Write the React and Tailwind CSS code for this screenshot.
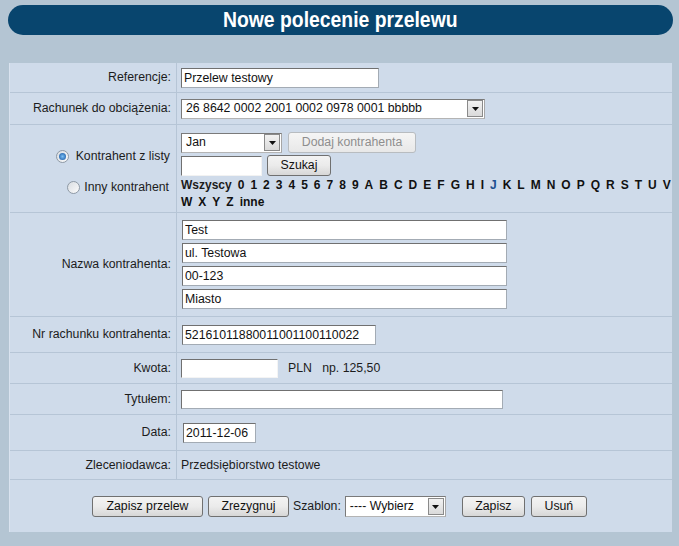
import React from "react";

const letters = ["0","1","2","3","4","5","6","7","8","9","A","B","C","D","E","F","G","H","I","J","K","L","M","N","O","P","Q","R","S","T","U","V","W","X","Y","Z","inne"];

const inputCls =
  "h-5 bg-white border border-[#a3abb4] border-t-[#707070] border-l-[#707070] px-[2px] text-[12.3px] text-[#111] outline-none";

function Btn({ children, className = "", disabled }) {
  return (
    <button
      className={`h-[21px] rounded-[3px] border text-[12.3px] ${
        disabled
          ? "border-[#b8bcc0] text-[#8e8e8e] bg-linear-to-b from-[#f5f5f5] to-[#e8e8e8]"
          : "border-[#707070] text-[#111] bg-linear-to-b from-[#f3f3f3] via-[#ebebeb] to-[#d7d7d7]"
      } ${className}`}
    >
      {children}
    </button>
  );
}

function Select({ value, className = "" }) {
  return (
    <div className={`flex items-center bg-white border border-[#7a7a7a] border-r-[#a6a6a6] border-b-[#b4b4b4] ${className}`}>
      <span className="flex-1 pl-[4px] text-[12.3px] text-[#111] truncate">{value}</span>
      <span className="w-[16px] h-[17px] mr-[1px] border border-[#8a8a8a] bg-linear-to-b from-[#f2f2f2] to-[#dadada] flex items-center justify-center">
        <svg width="7" height="4" viewBox="0 0 7 4">
          <path d="M0 0H7L3.5 4Z" fill="#111" />
        </svg>
      </span>
    </div>
  );
}

function Radio({ checked }) {
  return (
    <span className="w-[13px] h-[13px] rounded-full border border-[#8e99a5] bg-linear-to-br from-[#d9dde2] to-[#fbfbfb] flex items-center justify-center shrink-0">
      {checked && <span className="w-[7px] h-[7px] rounded-full bg-radial from-[#7cc0f5] to-[#0c4f9c]" />}
    </span>
  );
}

function Row({ label, h, children, className = "", labelCls = "items-center justify-end" }) {
  return (
    <div className={`flex border-b border-[#b6c5d6] ${h}`}>
      <div className={`w-[167px] shrink-0 border-r border-[#b6c5d6] flex pr-[5px] ${labelCls}`}>
        {label}
      </div>
      <div className={`flex-1 pl-[4px] ${className}`}>{children}</div>
    </div>
  );
}

export default function App() {
  return (
    <div
      className="min-h-[546px] bg-[#b4c5d3] pt-[5px] text-[12.3px] text-[#1c1c1c]"
      style={{ fontFamily: '"Liberation Sans", Arial, sans-serif' }}
    >
      <div className="ml-[8px] mr-[6px] h-[30px] rounded-full bg-[#08456e] flex items-center justify-center">
        <h1 className="inline-block scale-x-[0.88] text-white font-bold text-[22px] leading-none">
          Nowe polecenie przelewu
        </h1>
      </div>

      <div className="mt-[28px] ml-[9px] w-[663px] bg-[#cfdbea] border-l border-[#dae3ef]">
        <Row label="Referencje:" h="h-[30px]" className="flex items-center">
          <input className={`${inputCls} w-[198px]`} defaultValue="Przelew testowy" />
        </Row>

        <Row label="Rachunek do obciążenia:" h="h-[32px]" className="flex items-center">
          <Select value="26 8642 0002 2001 0002 0978 0001 bbbbb" className="w-[304px] h-5" />
        </Row>

        <Row
          h="h-[88px]"
          labelCls="flex-col items-end justify-start pt-[23px] gap-[15px]"
          className="pt-[7px] flex flex-col items-start"
          label={
            <>
              <span className="flex items-center gap-[7px] h-4 pr-[1px]">
                <Radio checked />
                Kontrahent z listy
              </span>
              <span className="flex items-center gap-[4px] h-4 pr-[2px]">
                <Radio />
                Inny kontrahent
              </span>
            </>
          }
        >
          <div className="flex items-center">
            <Select value="Jan" className="w-[101px] h-[20px]" />
            <Btn disabled className="ml-[6px] w-[128px] h-[20px]">Dodaj kontrahenta</Btn>
          </div>
          <div className="flex items-center mt-[2px]">
            <input className={`${inputCls} w-[81px] border-[#f2f2f2]`} />
            <Btn className="ml-[5px] w-[64px]">Szukaj</Btn>
          </div>
          <div className="flex flex-wrap gap-x-[6px] font-bold text-[12px] leading-[17px] mt-[1px]">
            <span>Wszyscy</span>
            {letters.map((l) => (
              <span key={l} className={l === "J" ? "text-[#1d4f8f]" : "text-[#111]"}>
                {l}
              </span>
            ))}
          </div>
        </Row>

        <Row label="Nazwa kontrahenta:" h="h-[104px]" className="pt-[7px] pl-[5px] flex flex-col gap-[3px]">
          {["Test", "ul. Testowa", "00-123", "Miasto"].map((v) => (
            <input key={v} className={`${inputCls} w-[325px]`} defaultValue={v} />
          ))}
        </Row>

        <Row label="Nr rachunku kontrahenta:" h="h-[36px]" className="flex items-center pl-[5px]">
          <input className={`${inputCls} w-[194px]`} defaultValue="52161011880011001100110022" />
        </Row>

        <Row label="Kwota:" h="h-[31px]" className="flex items-center">
          <input className={`${inputCls} w-[97px] h-[19px] border-[#f4f4f4]`} />
          <span className="ml-[10px]">PLN &nbsp; np. 125,50</span>
        </Row>

        <Row label="Tytułem:" h="h-[31px]" className="flex items-center">
          <input className={`${inputCls} w-[322px] h-[19px]`} />
        </Row>

        <Row label="Data:" h="h-[36px]" className="flex items-center pl-[6px]">
          <input className={`${inputCls} w-[73px]`} defaultValue="2011-12-06" />
        </Row>

        <Row label="Zleceniodawca:" h="h-[29px]" className="flex items-center">
          <span>Przedsiębiorstwo testowe</span>
        </Row>

        <div className="h-[52px] flex items-center pl-[82px] pt-[1px]">
          <Btn className="w-[111px]">Zapisz przelew</Btn>
          <Btn className="ml-[5px] w-[81px]">Zrezygnuj</Btn>
          <span className="ml-[4px]">Szablon:</span>
          <Select value="---- Wybierz" className="ml-[4px] w-[101px] h-[21px]" />
          <Btn className="ml-[16px] w-[63px]">Zapisz</Btn>
          <Btn className="ml-[6px] w-[56px]">Usuń</Btn>
        </div>
      </div>
    </div>
  );
}
